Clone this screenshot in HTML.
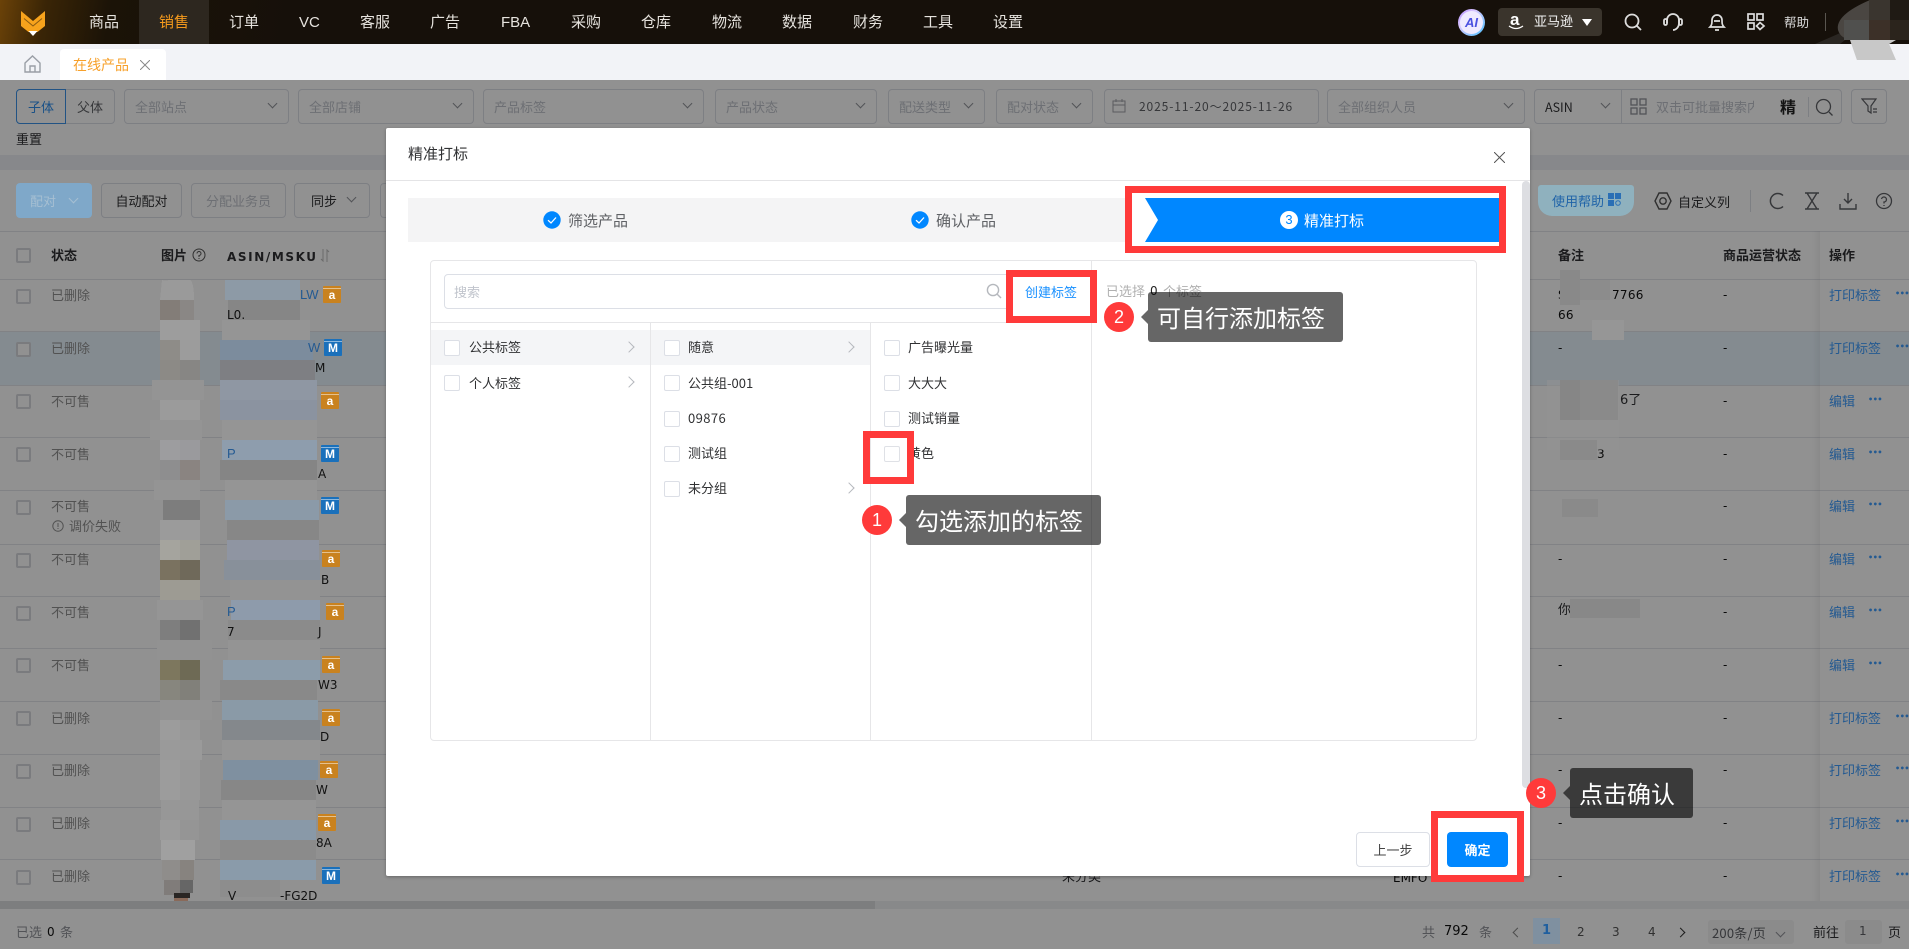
<!DOCTYPE html>
<html lang="zh"><head><meta charset="utf-8"><title>精准打标</title>
<style>
*{box-sizing:border-box;margin:0;padding:0}
html,body{width:1909px;height:949px;overflow:hidden;background:#fff}
body{position:relative;font-family:"Noto Sans CJK SC","Liberation Sans",sans-serif;font-size:13px;color:#303133}
.t{position:absolute;white-space:nowrap;line-height:20px;font-style:normal}
.a{position:absolute}
.n{color:#e6e3de;font-size:15px;top:12px}
.f{position:absolute;top:89px;height:35px;border:1px solid #dcdfe6;border-radius:4px;color:#c0c4cc;line-height:33px;padding-left:10px;background:#fff;white-space:nowrap}
.ch{position:absolute;width:7px;height:7px;border-right:1px solid #909399;border-bottom:1px solid #909399;transform:rotate(45deg)}
.b{position:absolute;top:183px;height:35px;border:1px solid #dcdfe6;border-radius:4px;line-height:33px;text-align:center;background:#fff}
.l{position:absolute;left:0;width:1909px;height:1px;background:#e3e5ea}
.cb{position:absolute;left:16px;width:15px;height:15px;border:2px solid #d6d8dd;border-radius:2px;background:#fff}
.st{left:51px;color:#909090}
.bl{color:#409eff}
.d{font-family:"DejaVu Sans",sans-serif;font-size:12px}
.op{left:1829px;color:#409eff;font-size:13px}
.dots{position:absolute;color:#409eff;font:bold 8px/10px "DejaVu Sans",sans-serif;letter-spacing:-.4px}
.bd{position:absolute;width:18px;height:17px;border-radius:1px;color:#fff;text-align:center;font:bold 12px/19px "Liberation Sans",sans-serif}
.o{background:#c9821f}.m{background:#1a70bb}
.bd:before{content:"";position:absolute;left:0;right:0;top:2px;height:1px;background:rgba(255,255,255,.5)}
.x{color:#111;font-family:"DejaVu Sans",sans-serif;font-size:12px}
.c{position:absolute;width:16px;height:16px;border:1px solid #dcdfe6;border-radius:2px;background:#fff}
.r{position:absolute;border:7px solid #ff3a3a}
.tip{position:absolute;height:50px;background:rgba(0,0,0,.6);border-radius:3px;color:#fff;font-size:24px;line-height:50px;padding-left:9px;white-space:nowrap}
.tip:before{content:"";position:absolute;left:-7px;top:18px;border:7px solid transparent;border-left:0;border-right-color:rgba(0,0,0,.6)}
.dot{position:absolute;width:30px;height:30px;border-radius:50%;background:#ff3a3a;color:#fff;font:18px/30px "Liberation Sans",sans-serif;text-align:center}
.ar{position:absolute;width:8px;height:8px;border-top:1px solid #b5b8bd;border-right:1px solid #b5b8bd;transform:rotate(45deg)}
</style></head><body>

<!-- top bar -->
<div class="a" style="left:0;top:0;width:1909px;height:44px;background:linear-gradient(100deg,#6b4208 0,#3a2506 45px,#1b1307 110px,#16100a 300px)"></div>
<div class="a" style="left:139px;top:0;width:70px;height:44px;background:#2d271f"></div>
<svg class="a" style="left:18px;top:9px" width="30" height="28" viewBox="0 0 30 28"><path d="M3 2 L15 12 L27 2 V17 L19.5 23 H10.5 L3 17Z" fill="#f7a31c"/><path d="M6 9.5 L15 17 L24 9.5" fill="none" stroke="#8a5a10" stroke-width="1"/><path d="M10.5 22 H19.5 L15 27Z" fill="#fff"/></svg>
<span class="t n" style="left:89px">商品</span>
<span class="t n" style="left:159px;color:#f59a1c">销售</span>
<span class="t n" style="left:229px">订单</span>
<span class="t n" style="left:299px;top:13px;font-family:'Liberation Sans'">VC</span>
<span class="t n" style="left:360px">客服</span>
<span class="t n" style="left:430px">广告</span>
<span class="t n" style="left:501px;top:13px;font-family:'Liberation Sans'">FBA</span>
<span class="t n" style="left:571px">采购</span>
<span class="t n" style="left:641px">仓库</span>
<span class="t n" style="left:712px">物流</span>
<span class="t n" style="left:782px">数据</span>
<span class="t n" style="left:853px">财务</span>
<span class="t n" style="left:923px">工具</span>
<span class="t n" style="left:993px">设置</span>

<div class="a" style="left:1458px;top:9px;width:27px;height:27px;border-radius:50%;background:linear-gradient(135deg,#b48cff,#d9c8ff 35%,#48c0ff);padding:2px"><div style="width:23px;height:23px;border-radius:50%;background:#efeaff;color:#4a50e0;font:italic bold 13px/23px 'Liberation Sans';text-align:center">AI</div></div>
<div class="a" style="left:1498px;top:8px;width:104px;height:28px;background:#3a342c;border-radius:4px"></div>
<span class="t" style="left:1510px;top:9px;color:#fff;font:bold 17px/22px 'Liberation Sans'">a</span>
<svg class="a" style="left:1508px;top:25px" width="16" height="6"><path d="M1 1 Q8 6 15 1" fill="none" stroke="#fff" stroke-width="1.3"/></svg>
<span class="t" style="left:1534px;top:11px;color:#f3f3f3;font-size:13px">亚马逊</span>
<svg class="a" style="left:1582px;top:19px" width="10" height="7"><path d="M0 0H10L5 7Z" fill="#fff"/></svg>
<svg class="a" style="left:1623px;top:12px" width="20" height="20" fill="none" stroke="#ddd" stroke-width="1.8"><circle cx="9" cy="9" r="6.5"/><path d="M13.5 13.5 L18 18"/></svg>
<svg class="a" style="left:1662px;top:12px" width="22" height="20" fill="none" stroke="#ddd" stroke-width="1.8"><path d="M5 11 V8 a6 6 0 0 1 12 0 V11 a6 7 0 0 1 -6 7"/><rect x="2" y="7" width="3" height="6" rx="1.5"/><rect x="17" y="7" width="3" height="6" rx="1.5"/></svg>
<svg class="a" style="left:1707px;top:12px" width="20" height="20" fill="none" stroke="#ddd" stroke-width="1.7"><path d="M3 15 C5 13 5 11 5 8 a5 5 0 0 1 10 0 C15 11 15 13 17 15Z"/><path d="M7 9H13M8 18H12"/></svg>
<svg class="a" style="left:1746px;top:12px" width="20" height="20" fill="none" stroke="#ddd" stroke-width="1.7"><rect x="2" y="2" width="6" height="6"/><rect x="11" y="2" width="6" height="6"/><rect x="2" y="11" width="6" height="6"/><path d="M14 10.5 L18 14 L14 17.5 L10.5 14Z"/></svg>
<span class="t" style="left:1784px;top:12px;color:#ddd;font-size:12.5px">帮助</span>
<div class="a" style="left:1825px;top:13px;width:1px;height:18px;background:#5a5650"></div>
<svg class="a" style="left:1700px;top:0" width="209" height="44"><path d="M115 44 L170 20 L140 44Z" fill="#2a2622"/><path d="M170 0 Q135 15 138 30 Q142 44 170 40 H195 V0Z" fill="#4a4642"/><rect x="144" y="20" width="25" height="20" fill="#50504e"/><rect x="169" y="20" width="21" height="20" fill="#3c3028"/><rect x="190" y="20" width="19" height="20" fill="#2b241c"/><rect x="169" y="0" width="21" height="20" fill="#3a352f"/><rect x="190" y="0" width="19" height="20" fill="#1f1a14"/></svg>

<!-- tab bar -->
<div class="a" style="left:0;top:44px;width:1909px;height:36px;background:#f2f3f7"></div>
<svg class="a" style="left:24px;top:55px" width="17" height="18" fill="none" stroke="#9a9ea6" stroke-width="1.4"><path d="M1 8 L8.5 1 L16 8 V17 H1Z"/><path d="M6 17 V11 H11 V17"/></svg>
<div class="a" style="left:60px;top:49px;width:106px;height:31px;background:#fff;border-radius:4px 4px 0 0"></div>
<span class="t" style="left:73px;top:55px;color:#f7a02a;font-size:14px">在线产品</span>
<svg class="a" style="left:140px;top:60px" width="10" height="10" stroke="#888" stroke-width="1"><path d="M0 0L10 10M10 0L0 10"/></svg>

<!-- filters -->
<div class="f" style="left:16px;width:50px;border:1px solid #3d93e8;color:#2f8fee;padding:0;text-align:center;border-radius:4px 0 0 4px;z-index:1">子体</div>
<div class="f" style="left:65px;width:50px;color:#606266;padding:0;text-align:center;border-radius:0 4px 4px 0">父体</div>
<div class="f" style="left:124px;width:165px">全部站点<i class="ch" style="right:12px;top:10px"></i></div>
<div class="f" style="left:298px;width:176px">全部店铺<i class="ch" style="right:12px;top:10px"></i></div>
<div class="f" style="left:483px;width:221px">产品标签<i class="ch" style="right:12px;top:10px"></i></div>
<div class="f" style="left:715px;width:162px">产品状态<i class="ch" style="right:12px;top:10px"></i></div>
<div class="f" style="left:888px;width:97px">配送类型<i class="ch" style="right:12px;top:10px"></i></div>
<div class="f" style="left:996px;width:97px">配对状态<i class="ch" style="right:12px;top:10px"></i></div>
<div class="f" style="left:1104px;width:215px;padding-left:34px;color:#606266;font-size:12px;letter-spacing:.9px">2025-11-20～2025-11-26</div>
<svg class="a" style="left:1112px;top:99px" width="14" height="14" fill="none" stroke="#a0a3a8"><rect x="1" y="2" width="12" height="11"/><path d="M1 6H13M4 0V3M10 0V3"/></svg>
<div class="f" style="left:1327px;width:198px">全部组织人员<i class="ch" style="right:12px;top:10px"></i></div>
<div class="f" style="left:1534px;width:88px;color:#303133;font-size:12.5px;border-radius:4px 0 0 4px">ASIN<i class="ch" style="right:12px;top:10px"></i></div>
<div class="f" style="left:1621px;width:221px;border-radius:0 4px 4px 0;padding-left:34px;overflow:hidden"><span style="display:inline-block;width:98px;overflow:hidden;vertical-align:top">双击可批量搜索内容</span></div>
<svg class="a" style="left:1630px;top:98px" width="18" height="18" fill="none" stroke="#909399" stroke-width="1.3"><rect x="1" y="1" width="6" height="6"/><rect x="10" y="1" width="6" height="6"/><rect x="1" y="10" width="6" height="6"/><rect x="10" y="10" width="6" height="6"/></svg>
<span class="t" style="left:1780px;top:96px;font-size:16px;font-weight:700;color:#222">精</span>
<div class="a" style="left:1808px;top:97px;width:1px;height:20px;background:#dcdfe6"></div>
<svg class="a" style="left:1815px;top:98px" width="19" height="19" fill="none" stroke="#606266" stroke-width="1.3"><circle cx="8.5" cy="8.5" r="7"/><path d="M14 14L17.5 17.5"/></svg>
<div class="f" style="left:1851px;width:36px"></div>
<svg class="a" style="left:1861px;top:98px" width="17" height="17" fill="none" stroke="#606266" stroke-width="1.2"><path d="M1 1H15L10 8V15L7 13V8Z"/><path d="M12 11H16M12 14H16"/></svg>
<span class="t" style="left:16px;top:129px;color:#303133">重置</span>
<div class="a" style="left:0;top:155px;width:1909px;height:15px;background:#eef0f4"></div>

<!-- toolbar -->
<div class="b" style="left:101px;width:81px">自动配对</div>
<div class="b" style="left:191px;width:95px;color:#c0c4cc">分配业务员</div>
<div class="b" style="left:294px;width:76px;padding-right:16px">同步<i class="ch" style="right:14px;top:10px"></i></div>
<div class="b" style="left:380px;width:80px"></div>
<svg class="a" style="left:1654px;top:191px" width="18" height="20" fill="none" stroke="#555" stroke-width="1.4"><path d="M5 2H13L17 10L13 18H5L1 10Z"/><circle cx="9" cy="10" r="3.2"/></svg>
<span class="t" style="left:1678px;top:192px">自定义列</span>
<div class="a" style="left:1750px;top:190px;width:1px;height:22px;background:#dcdfe6"></div>
<svg class="a" style="left:1768px;top:191px" width="18" height="20" fill="none" stroke="#606266" stroke-width="1.5"><path d="M15 4.5 A7.5 7.5 0 1 0 15 15.5"/></svg>
<svg class="a" style="left:1804px;top:192px" width="16" height="18" fill="none" stroke="#606266" stroke-width="1.4"><path d="M1 1H15M1 17H15M3 1 L13 17M13 1 L3 17"/></svg>
<svg class="a" style="left:1839px;top:192px" width="18" height="18" fill="none" stroke="#606266" stroke-width="1.4"><path d="M9 1V11M5 7L9 11L13 7M1 12V17H17V12"/></svg>
<svg class="a" style="left:1875px;top:192px" width="18" height="18" fill="none" stroke="#606266" stroke-width="1.3"><circle cx="9" cy="9" r="7.5"/><path d="M6.5 7 A2.5 2.5 0 1 1 9 10V11.5M9 13V14"/></svg>

<!-- table -->
<div class="l" style="top:231px"></div>
<div class="a" style="left:0;top:331px;width:1909px;height:54px;background:#e8f4fd"></div>
<div class="l" style="top:279px"></div><div class="l" style="top:331px"></div><div class="l" style="top:385px"></div><div class="l" style="top:437px"></div><div class="l" style="top:490px"></div><div class="l" style="top:544px"></div><div class="l" style="top:596px"></div><div class="l" style="top:648px"></div><div class="l" style="top:701px"></div><div class="l" style="top:754px"></div><div class="l" style="top:807px"></div><div class="l" style="top:859px"></div>
<div class="a" style="left:1812px;top:231px;width:8px;height:670px;background:linear-gradient(90deg,rgba(0,0,0,0),rgba(0,0,0,.05))"></div>
<div class="cb" style="top:248px"></div>
<b class="t" style="left:51px;top:245px">状态</b>
<b class="t" style="left:161px;top:245px">图片</b>
<svg class="a" style="left:192px;top:248px" width="14" height="14" fill="none" stroke="#555"><circle cx="7" cy="7" r="6"/><path d="M5 5.5 A2 2 0 1 1 7 7.5V9M7 10V11"/></svg>
<b class="t" style="left:227px;top:247px;font-family:'DejaVu Sans',sans-serif;font-size:12px;letter-spacing:1.6px">ASIN/MSKU</b>
<svg class="a" style="left:320px;top:249px" width="10" height="13" stroke="#bbb" fill="none"><path d="M3 0V12L1 10M7 13V1L9 3"/></svg>
<b class="t" style="left:1558px;top:245px">备注</b>
<b class="t" style="left:1723px;top:245px">商品运营状态</b>
<b class="t" style="left:1829px;top:245px">操作</b>

<div class="cb" style="top:289px"></div><div class="cb" style="top:342px"></div><div class="cb" style="top:394px"></div><div class="cb" style="top:447px"></div><div class="cb" style="top:500px"></div><div class="cb" style="top:553px"></div><div class="cb" style="top:606px"></div><div class="cb" style="top:658px"></div><div class="cb" style="top:711px"></div><div class="cb" style="top:764px"></div><div class="cb" style="top:817px"></div><div class="cb" style="top:870px"></div>
<span class="t st" style="top:285px">已删除</span>
<span class="t st" style="top:338px">已删除</span>
<span class="t st" style="top:391px">不可售</span>
<span class="t st" style="top:444px">不可售</span>
<span class="t st" style="top:496px">不可售</span>
<svg class="a" style="left:52px;top:520px" width="12" height="12" fill="none" stroke="#909090"><circle cx="6" cy="6" r="5.2"/><path d="M6 3V7M6 8V9"/></svg>
<span class="t st" style="left:69px;top:516px">调价失败</span>
<span class="t st" style="top:549px">不可售</span>
<span class="t st" style="top:602px">不可售</span>
<span class="t st" style="top:655px">不可售</span>
<span class="t st" style="top:708px">已删除</span>
<span class="t st" style="top:760px">已删除</span>
<span class="t st" style="top:813px">已删除</span>
<span class="t st" style="top:866px">已删除</span>

<!-- behind-modal row end -->
<span class="t x" style="left:1393px;top:868px">EMFO</span>
<span class="t" style="left:1062px;top:866px">未分类</span>
<span class="t x" style="left:447px;top:860px">-</span>
<span class="t x" style="left:677px;top:860px">-</span>

<!-- remarks -->
<span class="t x" style="left:1558px;top:285px;letter-spacing:.3px">S</span>
<span class="t x" style="left:1612px;top:285px;letter-spacing:.3px">7766</span>
<span class="t x" style="left:1558px;top:305px;letter-spacing:.3px">66</span>
<span class="t x" style="left:1558px;top:338px">-</span>
<span class="t" style="left:1620px;top:391px;font-family:'DejaVu Sans','Noto Sans CJK SC'">6了</span>
<span class="t x" style="left:1597px;top:444px">3</span>
<span class="t" style="left:1558px;top:599px">你</span>
<span class="t x" style="left:1558px;top:549px">-</span><span class="t x" style="left:1558px;top:655px">-</span><span class="t x" style="left:1558px;top:708px">-</span><span class="t x" style="left:1558px;top:760px">-</span><span class="t x" style="left:1558px;top:813px">-</span><span class="t x" style="left:1558px;top:866px">-</span>
<span class="t x" style="left:1723px;top:285px">-</span><span class="t x" style="left:1723px;top:338px">-</span><span class="t x" style="left:1723px;top:391px">-</span><span class="t x" style="left:1723px;top:444px">-</span><span class="t x" style="left:1723px;top:496px">-</span><span class="t x" style="left:1723px;top:549px">-</span><span class="t x" style="left:1723px;top:602px">-</span><span class="t x" style="left:1723px;top:655px">-</span><span class="t x" style="left:1723px;top:708px">-</span><span class="t x" style="left:1723px;top:760px">-</span><span class="t x" style="left:1723px;top:813px">-</span><span class="t x" style="left:1723px;top:866px">-</span>

<span class="t op" style="top:285px">打印标签</span><span class="dots" style="left:1895px;top:289px">•••</span>
<span class="t op" style="top:338px">打印标签</span><span class="dots" style="left:1895px;top:342px">•••</span>
<span class="t op" style="top:391px">编辑</span><span class="dots" style="left:1868px;top:395px">•••</span>
<span class="t op" style="top:444px">编辑</span><span class="dots" style="left:1868px;top:448px">•••</span>
<span class="t op" style="top:496px">编辑</span><span class="dots" style="left:1868px;top:500px">•••</span>
<span class="t op" style="top:549px">编辑</span><span class="dots" style="left:1868px;top:553px">•••</span>
<span class="t op" style="top:602px">编辑</span><span class="dots" style="left:1868px;top:606px">•••</span>
<span class="t op" style="top:655px">编辑</span><span class="dots" style="left:1868px;top:659px">•••</span>
<span class="t op" style="top:708px">打印标签</span><span class="dots" style="left:1895px;top:712px">•••</span>
<span class="t op" style="top:760px">打印标签</span><span class="dots" style="left:1895px;top:764px">•••</span>
<span class="t op" style="top:813px">打印标签</span><span class="dots" style="left:1895px;top:817px">•••</span>
<span class="t op" style="top:866px">打印标签</span><span class="dots" style="left:1895px;top:870px">•••</span>

<!-- bottom -->
<div class="a" style="left:0;top:901px;width:1909px;height:8px;background:#f0f1f3"></div>
<div class="a" style="left:0;top:901px;width:875px;height:8px;background:#dcdde0"></div>
<span class="t" style="left:16px;top:922px;color:#909399">已选</span><span class="t x" style="left:47px;top:922px">0</span><span class="t" style="left:60px;top:922px;color:#909399">条</span>
<span class="t" style="left:1422px;top:922px;color:#909399">共</span><b class="t x" style="left:1444px;top:922px;font-weight:400;font-size:13px">792</b><span class="t" style="left:1479px;top:922px;color:#909399">条</span>
<div class="ch" style="left:1514px;top:929px;transform:rotate(135deg);border-color:#888"></div>
<span class="t x" style="left:1577px;top:922px;color:#555">2</span><span class="t x" style="left:1612px;top:922px;color:#555">3</span><span class="t x" style="left:1648px;top:922px;color:#555">4</span>
<div class="ch" style="left:1677px;top:929px;transform:rotate(-45deg);border-color:#333"></div>
<div class="a" style="left:1708px;top:920px;width:86px;height:24px;background:#f4f4f5;border-radius:3px"></div>
<span class="t" style="left:1712px;top:923px;color:#606266;letter-spacing:.2px">200条/页</span>
<i class="ch" style="left:1777px;top:929px"></i>
<span class="t" style="left:1813px;top:922px">前往</span>
<div class="a" style="left:1845px;top:920px;width:37px;height:24px;background:#f4f4f5;border-radius:3px"></div>
<span class="t x" style="left:1859px;top:921px;color:#606266">1</span>
<span class="t" style="left:1888px;top:922px">页</span>

<!-- mask -->
<div class="a" style="left:0;top:80px;width:1909px;height:869px;background:rgba(0,0,0,.43);z-index:10"></div>

<!-- above mask: blue button, help pill, mosaics, badges -->
<div style="position:absolute;left:0;top:0;width:1909px;height:949px;z-index:11">
<div class="a" style="left:16px;top:183px;width:76px;height:35px;background:#7fa8c9;border-radius:4px;color:#a6bfd2;line-height:35px;padding-left:14px">配对<i class="ch" style="left:54px;top:12px;border-color:#a6bfd2"></i></div>
<div class="a" style="left:1538px;top:185px;width:96px;height:31px;background:#8fb1be;border-radius:3px 3px 14px 14px;color:#1f63a8;line-height:31px;padding-left:14px;font-size:13px">使用帮助</div>
<svg class="a" style="left:1608px;top:193px" width="14" height="15"><rect width="6" height="6" fill="#2a6fb5"/><rect x="7" width="6" height="6" fill="#2a6fb5"/><rect y="7" width="6" height="6" fill="#2a6fb5"/><circle cx="10" cy="10" r="2.3" fill="none" stroke="#2a6fb5"/></svg>
<div class="a" style="left:1533px;top:918px;width:27px;height:26px;background:#7f90a0"></div>
<b class="t" style="left:1542px;top:921px;color:#1f5f9f;font-family:'DejaVu Sans'">1</b>
<svg class="a" style="left:0;top:0" width="1909" height="949" shape-rendering="crispEdges">
<!-- image col -->
<g>
<path d="M162 280 Q164 281 170 280 H190 Q194 282 194 300 H160Z" fill="#9a9a9a"/>
<rect x="160" y="300" width="20" height="20" fill="#837d78"/><rect x="180" y="300" width="14" height="20" fill="#8a8785"/>
<rect x="160" y="320" width="40" height="20" fill="#9d9d9d"/>
<rect x="160" y="340" width="20" height="20" fill="#8e8c88"/><rect x="180" y="340" width="20" height="20" fill="#9c9c9c"/>
<rect x="160" y="360" width="20" height="20" fill="#8c8a86"/><rect x="180" y="360" width="20" height="20" fill="#878684"/>
<rect x="152" y="380" width="52" height="20" fill="#949494"/>
<rect x="160" y="400" width="40" height="20" fill="#9b9b9b"/>
<rect x="150" y="420" width="52" height="20" fill="#949494"/>
<rect x="160" y="440" width="20" height="20" fill="#9d9d9f"/><rect x="180" y="440" width="20" height="20" fill="#9a9a9d"/>
<rect x="160" y="460" width="20" height="20" fill="#8e8e8f"/><rect x="180" y="460" width="20" height="20" fill="#8a8481"/>
<rect x="154" y="480" width="46" height="20" fill="#949494"/>
<rect x="163" y="500" width="37" height="20" fill="#7d7d7d"/>
<rect x="160" y="520" width="40" height="20" fill="#9b9b9b"/>
<rect x="160" y="540" width="20" height="20" fill="#a5a49e"/><rect x="180" y="540" width="20" height="20" fill="#a09f98"/>
<rect x="160" y="560" width="20" height="20" fill="#7a7260"/><rect x="180" y="560" width="20" height="20" fill="#6f695a"/>
<rect x="160" y="580" width="40" height="20" fill="#9d9b93"/>
<rect x="157" y="600" width="46" height="20" fill="#959595"/>
<rect x="160" y="620" width="20" height="20" fill="#7e7e7e"/><rect x="180" y="620" width="20" height="20" fill="#717171"/>
<rect x="157" y="640" width="55" height="20" fill="#929292"/>
<rect x="160" y="660" width="20" height="20" fill="#7d775e"/><rect x="180" y="660" width="20" height="20" fill="#6e6a55"/>
<rect x="160" y="680" width="20" height="20" fill="#87867e"/><rect x="180" y="680" width="20" height="20" fill="#81807a"/>
<rect x="160" y="700" width="52" height="20" fill="#939393"/>
<rect x="160" y="720" width="20" height="20" fill="#9c9c9c"/><rect x="180" y="720" width="20" height="20" fill="#989898"/>
<rect x="160" y="740" width="42" height="20" fill="#9a9a9a"/>
<rect x="160" y="760" width="20" height="40" fill="#9c9c9c"/><rect x="180" y="760" width="20" height="40" fill="#989898"/>
<rect x="161" y="800" width="38" height="20" fill="#979797"/>
<rect x="160" y="820" width="20" height="20" fill="#9b9b9b"/><rect x="180" y="820" width="19" height="20" fill="#959595"/>
<rect x="161" y="840" width="34" height="20" fill="#a0a0a0"/>
<rect x="162" y="860" width="18" height="20" fill="#8f8d8b"/><rect x="180" y="860" width="14" height="20" fill="#87837f"/>
<rect x="164" y="880" width="16" height="15" fill="#807c7a"/><rect x="180" y="880" width="13" height="13" fill="#666"/>
<rect x="174" y="893" width="16" height="5" fill="#2a2624"/><rect x="174" y="898" width="14" height="3" fill="#8a6a5a"/>
</g>
<!-- asin col -->
<g>
<rect x="225" y="280" width="75" height="20" fill="#8d9aa6"/>
<rect x="228" y="300" width="72" height="20" fill="#868686"/>
<rect x="222" y="320" width="88" height="20" fill="#959595"/>
<rect x="220" y="340" width="93" height="20" fill="#7c8c9d"/>
<rect x="220" y="360" width="95" height="20" fill="#7e7f83"/>
<rect x="220" y="380" width="97" height="20" fill="#8f97a3"/>
<rect x="220" y="400" width="97" height="20" fill="#8b93a0"/>
<rect x="222" y="420" width="95" height="20" fill="#959595"/>
<rect x="222" y="440" width="95" height="20" fill="#8e9dad"/>
<rect x="220" y="460" width="97" height="20" fill="#858585"/>
<rect x="225" y="480" width="92" height="20" fill="#959595"/>
<rect x="225" y="500" width="94" height="20" fill="#8b9aa8"/>
<rect x="227" y="520" width="92" height="20" fill="#878787"/>
<rect x="227" y="540" width="92" height="20" fill="#8f95a2"/>
<rect x="224" y="560" width="96" height="20" fill="#88909a"/>
<rect x="230" y="580" width="90" height="20" fill="#939393"/>
<rect x="231" y="600" width="89" height="20" fill="#8e9bab"/>
<rect x="228" y="620" width="92" height="20" fill="#8b8b8b"/>
<rect x="228" y="640" width="92" height="20" fill="#949494"/>
<rect x="223" y="660" width="97" height="20" fill="#8c9caa"/>
<rect x="220" y="680" width="97" height="20" fill="#898989"/>
<rect x="222" y="700" width="96" height="20" fill="#8a9aa7"/>
<rect x="222" y="720" width="98" height="20" fill="#84888c"/>
<rect x="222" y="740" width="98" height="20" fill="#959595"/>
<rect x="223" y="760" width="95" height="20" fill="#7f90a0"/>
<rect x="221" y="780" width="95" height="20" fill="#878787"/>
<rect x="222" y="800" width="94" height="20" fill="#959595"/>
<rect x="220" y="820" width="96" height="20" fill="#8999a8"/>
<rect x="220" y="840" width="96" height="20" fill="#8b8b8b"/>
<rect x="220" y="860" width="96" height="20" fill="#8a9baa"/>
<rect x="220" y="880" width="60" height="17" fill="#8d8d8d"/>
</g>
<!-- remarks mosaic -->
<rect x="1560" y="270" width="20" height="35" fill="#898989"/><rect x="1580" y="280" width="30" height="20" fill="#8c8c8c"/>
<rect x="1592" y="320" width="32" height="20" fill="#969696"/>
<rect x="1547" y="380" width="72" height="70" fill="#949494" opacity=".5"/>
<rect x="1560" y="380" width="20" height="40" fill="#868686"/><rect x="1580" y="380" width="38" height="40" fill="#8a8a8a"/>
<rect x="1560" y="440" width="37" height="20" fill="#8a8a8a"/>
<rect x="1562" y="499" width="36" height="18" fill="#8a8a8a"/>
<rect x="1570" y="599" width="70" height="19" fill="#888"/>
</svg>
<div class="t" style="left:300px;top:285px;color:#245a92;font-family:'Liberation Sans';font-size:13px">LW</div>
<span class="bd o" style="left:323px;top:286px">a</span>
<span class="t x" style="left:227px;top:305px">L0.</span>
<span class="t" style="left:308px;top:338px;color:#245a92;font-family:'Liberation Sans'">W</span>
<span class="bd m" style="left:324px;top:339px">M</span>
<span class="t x" style="left:315px;top:358px">M</span>
<span class="bd o" style="left:321px;top:392px">a</span>
<span class="t" style="left:227px;top:444px;color:#245a92;font-family:'Liberation Sans'">P</span>
<span class="bd m" style="left:321px;top:445px">M</span>
<span class="t x" style="left:318px;top:464px">A</span>
<span class="bd m" style="left:321px;top:497px">M</span>
<span class="bd o" style="left:322px;top:550px">a</span>
<span class="t x" style="left:321px;top:570px">B</span>
<span class="t" style="left:227px;top:602px;color:#245a92;font-family:'Liberation Sans'">P</span>
<span class="bd o" style="left:326px;top:603px">a</span>
<span class="t x" style="left:227px;top:622px">7</span>
<span class="t x" style="left:318px;top:622px">J</span>
<span class="bd o" style="left:322px;top:656px">a</span>
<span class="t x" style="left:318px;top:675px">W3</span>
<span class="bd o" style="left:322px;top:709px">a</span>
<span class="t x" style="left:320px;top:727px">D</span>
<span class="bd o" style="left:320px;top:761px">a</span>
<span class="t x" style="left:316px;top:780px">W</span>
<span class="bd o" style="left:318px;top:814px">a</span>
<span class="t x" style="left:316px;top:833px">8A</span>
<span class="bd m" style="left:322px;top:867px">M</span>
<span class="t x" style="left:228px;top:886px">V</span>
<span class="t x" style="left:280px;top:886px">-FG2D</span>
</div>

<!-- modal -->
<div class="a" style="left:386px;top:128px;width:1144px;height:748px;background:#fff;border-radius:2px;box-shadow:0 1px 3px rgba(0,0,0,.3);z-index:20"></div>
<div style="position:absolute;left:0;top:0;width:1909px;height:949px;z-index:21">
<span class="t" style="left:408px;top:144px;font-size:15px;color:#303133">精准打标</span>
<svg class="a" style="left:1494px;top:152px" width="11" height="11" stroke="#555" stroke-width="1"><path d="M0 0L11 11M11 0L0 11"/></svg>
<div class="a" style="left:386px;top:180px;width:1144px;height:1px;background:#e4e4e6"></div>
<div class="a" style="left:1522px;top:181px;width:8px;height:607px;background:#dddee2;border-radius:4px"></div>
<!-- steps -->
<div class="a" style="left:408px;top:198px;width:717px;height:44px;background:#f4f4f5"></div>
<svg class="a" style="left:543px;top:211px" width="18" height="18"><circle cx="9" cy="9" r="8.7" fill="#0087ff"/><path d="M5 9.2L8 12L13 6.5" fill="none" stroke="#fff" stroke-width="1.3"/></svg>
<span class="t" style="left:568px;top:211px;font-size:15px;color:#606266">筛选产品</span>
<svg class="a" style="left:911px;top:211px" width="18" height="18"><circle cx="9" cy="9" r="8.7" fill="#0087ff"/><path d="M5 9.2L8 12L13 6.5" fill="none" stroke="#fff" stroke-width="1.3"/></svg>
<span class="t" style="left:936px;top:211px;font-size:15px;color:#606266">确认产品</span>
<svg class="a" style="left:1145px;top:198px" width="354" height="44"><path d="M0 0H354V44H0L13 22Z" fill="#0087ff"/></svg>
<div class="a" style="left:1280px;top:211px;width:18px;height:18px;border-radius:50%;background:#fff;color:#0087ff;font:13px/18px 'Liberation Sans';text-align:center">3</div>
<span class="t" style="left:1304px;top:211px;font-size:15px;color:#fff">精准打标</span>
<!-- panel -->
<div class="a" style="left:430px;top:260px;width:1047px;height:481px;border:1px solid #e6e6e8;border-radius:4px"></div>
<div class="a" style="left:444px;top:274px;width:566px;height:35px;border:1px solid #dcdfe6;border-radius:4px"></div>
<span class="t" style="left:454px;top:282px;color:#c0c4cc">搜索</span>
<svg class="a" style="left:986px;top:283px" width="16" height="16" fill="none" stroke="#b5b8bd" stroke-width="1.4"><circle cx="7" cy="7" r="5.6"/><path d="M11 11L15 15"/></svg>
<span class="t" style="left:1025px;top:282px;color:#1890ff;font-size:13px">创建标签</span>
<span class="t" style="left:1106px;top:281px;color:#b0b0b0;font-size:13px">已选择</span>
<span class="t" style="left:1150px;top:281px;color:#222;font-size:12px;font-family:'DejaVu Sans'">0</span>
<span class="t" style="left:1163px;top:281px;color:#b0b0b0;font-size:13px">个标签</span>
<div class="a" style="left:431px;top:322px;width:660px;height:1px;background:#e6e6e8"></div>
<div class="a" style="left:650px;top:323px;width:1px;height:417px;background:#e6e6e8"></div>
<div class="a" style="left:870px;top:323px;width:1px;height:417px;background:#e6e6e8"></div>
<div class="a" style="left:1091px;top:261px;width:1px;height:479px;background:#e6e6e8"></div>
<div class="a" style="left:431px;top:330px;width:219px;height:35px;background:#f4f5f7"></div>
<div class="a" style="left:651px;top:330px;width:219px;height:35px;background:#f4f5f7"></div>

<i class="c" style="left:444px;top:340px"></i><span class="t" style="left:469px;top:337px">公共标签</span><i class="ar" style="left:625px;top:343px"></i>
<i class="c" style="left:444px;top:375px"></i><span class="t" style="left:469px;top:373px">个人标签</span><i class="ar" style="left:625px;top:378px"></i>

<i class="c" style="left:664px;top:340px"></i><span class="t" style="left:688px;top:337px">随意</span><i class="ar" style="left:845px;top:343px"></i>
<i class="c" style="left:664px;top:375px"></i><span class="t" style="left:688px;top:373px">公共组-001</span>
<i class="c" style="left:664px;top:411px"></i><span class="t" style="left:688px;top:408px;letter-spacing:.4px">09876</span>
<i class="c" style="left:664px;top:446px"></i><span class="t" style="left:688px;top:443px">测试组</span>
<i class="c" style="left:664px;top:481px"></i><span class="t" style="left:688px;top:478px">未分组</span><i class="ar" style="left:845px;top:484px"></i>

<i class="c" style="left:884px;top:340px"></i><span class="t" style="left:908px;top:337px">广告曝光量</span>
<i class="c" style="left:884px;top:375px"></i><span class="t" style="left:908px;top:373px">大大大</span>
<i class="c" style="left:884px;top:411px"></i><span class="t" style="left:908px;top:408px">测试销量</span>
<i class="c" style="left:884px;top:446px;border-color:#dfe1e6"></i><span class="t" style="left:908px;top:443px">黄色</span>

<div class="a" style="left:1356px;top:832px;width:74px;height:35px;border:1px solid #dcdfe6;border-radius:4px;text-align:center;line-height:33px;font-size:13px;color:#444">上一步</div>
<div class="a" style="left:1447px;top:832px;width:61px;height:35px;background:#0087ff;border-radius:4px;text-align:center;line-height:35px;font-size:13px;font-weight:700;color:#fff">确定</div>
</div>

<!-- annotations -->
<div style="position:absolute;left:0;top:0;width:1909px;height:949px;z-index:30">
<div class="r" style="left:1125px;top:186px;width:381px;height:67px"></div>
<div class="r" style="left:1006px;top:270px;width:91px;height:53px"></div>
<div class="r" style="left:863px;top:431px;width:51px;height:53px"></div>
<div class="r" style="left:1431px;top:811px;width:93px;height:71px"></div>
<div class="dot" style="left:862px;top:505px">1</div>
<div class="tip" style="left:906px;top:495px;width:195px">勾选添加的标签</div>
<div class="dot" style="left:1104px;top:302px">2</div>
<div class="tip" style="left:1148px;top:292px;width:195px">可自行添加标签</div>
<div class="dot" style="left:1526px;top:778px">3</div>
<div class="tip" style="left:1570px;top:768px;width:123px">点击确认</div>
<div class="a" style="left:1850px;top:40px;width:46px;height:20px;background:#c8c8c8;clip-path:polygon(0 0,100% 0,85% 20%,100% 100%,15% 100%)"></div>
</div>
</body></html>
